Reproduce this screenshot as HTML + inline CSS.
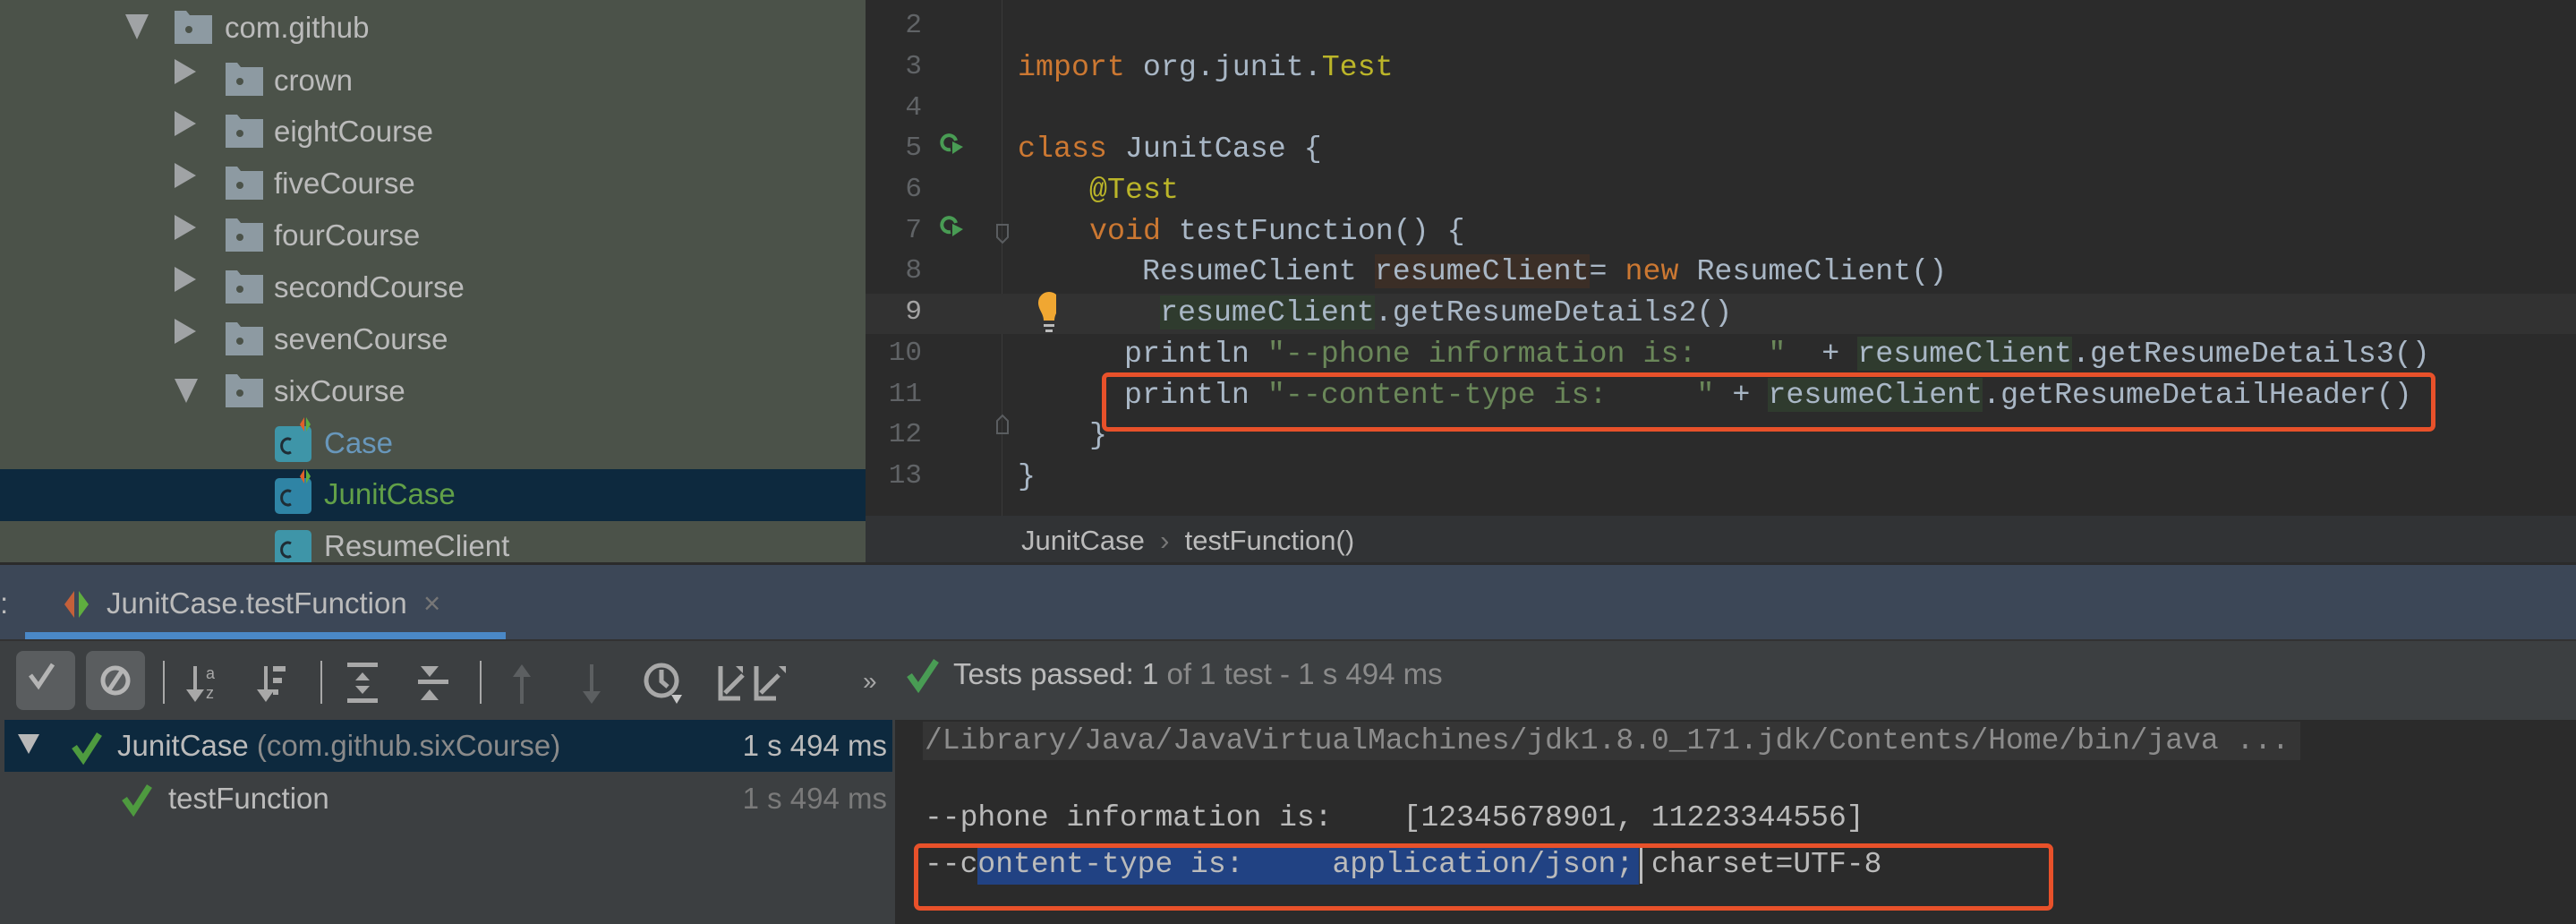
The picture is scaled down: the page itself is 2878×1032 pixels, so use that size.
<!DOCTYPE html>
<html><head><meta charset="utf-8"><style>
*{margin:0;padding:0;box-sizing:border-box}
body{width:2878px;height:1032px;overflow:hidden;background:#2b2b2b;position:relative;font-family:"Liberation Sans",sans-serif}
.a{position:absolute;white-space:pre}
.mono{font-family:"Liberation Mono",monospace;font-size:33.3px;line-height:46px}
.sans{font-size:33px;line-height:40px;color:#bbbbbb}
.k{color:#cc7832}.an{color:#bbb529}.s{color:#6a8759}.t{color:#a9b7c6}
.hg{background:#2f3b2e}.hb{background:#3b2e26}
.ln{position:absolute;left:990px;width:40px;text-align:right;font-family:"Liberation Mono",monospace;font-size:31px;color:#606366;line-height:46px}
</style></head><body>
<!-- project panel -->
<div class="a" style="left:0;top:0;width:967px;height:630px;background:#4b5249"></div>
<div class="a" style="left:0;top:524px;width:967px;height:58px;background:#0d293e"></div>
<svg class="a" style="left:0;top:0" width="967" height="630">
<g fill="#a0a3a5">
<polygon points="140,16 166,16 153,44"/>
<polygon points="195,66 219,80 195,94"/><polygon points="195,124 219,138 195,152"/><polygon points="195,182 219,196 195,210"/>
<polygon points="195,240 219,254 195,268"/><polygon points="195,298 219,312 195,326"/><polygon points="195,356 219,370 195,384"/>
<polygon points="195,423 221,423 208,450"/>
</g>
<g fill="#8d9aa2">
<path d="M195 12h13l4 5h25v32h-42z"/><path d="M252 70h13l4 5h25v32h-42z"/><path d="M252 128h13l4 5h25v32h-42z"/><path d="M252 186h13l4 5h25v32h-42z"/>
<path d="M252 244h13l4 5h25v32h-42z"/><path d="M252 302h13l4 5h25v32h-42z"/><path d="M252 360h13l4 5h25v32h-42z"/><path d="M252 418h13l4 5h25v32h-42z"/>
</g>
<g fill="#4b5249"><circle cx="211" cy="33" r="4"/><circle cx="268" cy="91" r="4"/><circle cx="268" cy="149" r="4"/><circle cx="268" cy="207" r="4"/><circle cx="268" cy="265" r="4"/><circle cx="268" cy="323" r="4"/><circle cx="268" cy="381" r="4"/><circle cx="268" cy="439" r="4"/></g>
<g><rect x="307" y="476" width="41" height="40" rx="5" fill="#3e95a8"/><rect x="307" y="534" width="41" height="40" rx="5" fill="#2f84a5"/><rect x="307" y="592" width="41" height="40" rx="5" fill="#3e95a8"/>
<polygon points="335,474 340,466 340,482" fill="#e0602a"/><polygon points="342,466 347,474 342,482" fill="#5fad3f"/>
<polygon points="335,532 340,524 340,540" fill="#e0602a"/><polygon points="342,524 347,532 342,540" fill="#5fad3f"/>
<g fill="none" stroke="#1f2d35" stroke-width="3"><path d="M325 491a7 8 0 1 0 0 14"/><path d="M325 549a7 8 0 1 0 0 14"/><path d="M325 607a7 8 0 1 0 0 14"/></g></g>
</svg>
<div class="a sans" style="left:251px;top:11px">com.github</div>
<div class="a sans" style="left:306px;top:70px">crown</div>
<div class="a sans" style="left:306px;top:127px">eightCourse</div>
<div class="a sans" style="left:306px;top:185px">fiveCourse</div>
<div class="a sans" style="left:306px;top:243px">fourCourse</div>
<div class="a sans" style="left:306px;top:301px">secondCourse</div>
<div class="a sans" style="left:306px;top:359px">sevenCourse</div>
<div class="a sans" style="left:306px;top:417px">sixCourse</div>
<div class="a sans" style="left:362px;top:475px;color:#6897bb">Case</div>
<div class="a sans" style="left:362px;top:532px;color:#62a048">JunitCase</div>
<div class="a sans" style="left:362px;top:590px">ResumeClient</div>

<!-- editor -->
<div class="a" style="left:967px;top:0;width:1911px;height:576px;background:#2b2b2b"></div>
<div class="a" style="left:1119px;top:0;width:1px;height:576px;background:#3a3a3a"></div>
<div class="a" style="left:967px;top:328px;width:1911px;height:45px;background:#323232"></div>
<div class="ln" style="top:6px">2</div><div class="ln" style="top:52px">3</div><div class="ln" style="top:98px">4</div><div class="ln" style="top:143px">5</div><div class="ln" style="top:189px">6</div><div class="ln" style="top:235px">7</div><div class="ln" style="top:280px">8</div><div class="ln" style="top:326px;color:#a4a3a3">9</div><div class="ln" style="top:372px">10</div><div class="ln" style="top:418px">11</div><div class="ln" style="top:463px">12</div><div class="ln" style="top:509px">13</div>
<svg class="a" style="left:1040px;top:140px" width="140" height="360">
<g fill="none" stroke="#499c54" stroke-width="4"><path d="M28 17a8 8 0 1 0 -6 10"/><path d="M28 109a8 8 0 1 0 -6 10"/></g>
<polygon points="24,18 36,24 24,32" fill="#499c54"/><polygon points="24,110 36,116 24,124" fill="#499c54"/>
<g fill="none" stroke="#5a5d60" stroke-width="2"><path d="M74 111h12v14l-6 6l-6-6z"/><path d="M74 344h12v-14l-6-6l-6 6z"/></g>
<path d="M132 186a12 12 0 0 0-12 12c0 8 6 12 6 20h12c0-8 6-12 6-20a12 12 0 0 0-12-12z" fill="#f0a732"/>
<rect x="126" y="222" width="12" height="3" fill="#bbb"/><rect x="128" y="228" width="8" height="3" fill="#bbb"/>
</svg>
<div class="a mono t" style="left:1137px;top:52px"><span class="k">import</span> org.junit.<span class="an">Test</span></div>
<div class="a mono t" style="left:1137px;top:143px"><span class="k">class</span> JunitCase {</div>
<div class="a mono an" style="left:1217px;top:189px">@Test</div>
<div class="a mono t" style="left:1217px;top:235px"><span class="k">void</span> testFunction() {</div>
<div class="a mono t" style="left:1276px;top:280px">ResumeClient <span class="hb">resumeClient</span>= <span class="k">new</span> ResumeClient()</div>
<div class="a mono t" style="left:1296px;top:326px"><span class="hg">resumeClient</span>.getResumeDetails2()</div>
<div class="a mono t" style="left:1256px;top:372px">println <span class="s">"--phone information is:    "</span>  + <span class="hg">resumeClient</span>.getResumeDetails3()</div>
<div class="a mono t" style="left:1256px;top:418px">println <span class="s">"--content-type is:     "</span> + <span class="hg">resumeClient</span>.getResumeDetailHeader()</div>
<div class="a mono t" style="left:1217px;top:463px">}</div>
<div class="a mono t" style="left:1137px;top:509px">}</div>
<div class="a" style="left:1231px;top:416px;width:1490px;height:66px;border:5px solid #e8512a;border-radius:7px"></div>
<div class="a" style="left:967px;top:576px;width:1911px;height:54px;background:#313335"></div>
<div class="a sans" style="left:1141px;top:584px;font-size:31px">JunitCase  <span style="color:#777">›</span>  testFunction()</div>

<!-- tool window tab bar -->
<div class="a" style="left:0;top:628px;width:2878px;height:86px;background:#3c4757;border-top:3px solid #2b2b2b"></div>
<div class="a sans" style="left:0;top:654px">:</div>
<svg class="a" style="left:70px;top:658px" width="40" height="34"><polygon points="13,2 2,17 13,32" fill="#c4603a"/><polygon points="18,2 29,17 18,32" fill="#5fad3f"/></svg>
<div class="a sans" style="left:119px;top:654px">JunitCase.testFunction  <span style="color:#777">×</span></div>
<div class="a" style="left:28px;top:706px;width:537px;height:8px;background:#4a88c7"></div>

<!-- toolbar -->
<div class="a" style="left:0;top:714px;width:2878px;height:90px;background:#3c3f41;border-top:2px solid #323232"></div>
<div class="a" style="left:18px;top:727px;width:66px;height:66px;background:#5a5d5f;border-radius:8px"></div>
<div class="a" style="left:96px;top:727px;width:66px;height:66px;background:#5a5d5f;border-radius:8px"></div>
<svg class="a" style="left:0;top:714px" width="1060" height="90">
<g fill="none" stroke="#b5b5b5" stroke-width="5"><path d="M34 40l9 12l16-24"/><circle cx="129" cy="46" r="14"/><path d="M121 58l16-24"/></g>
<g fill="#a8a8a8">
<rect x="182" y="24" width="2" height="48"/><rect x="358" y="24" width="2" height="48"/><rect x="536" y="24" width="2" height="48"/>
<rect x="216" y="30" width="4" height="30"/><polygon points="208,56 228,56 218,70"/><text x="230" y="44" font-size="18" fill="#a8a8a8" font-family="Liberation Sans">a</text><text x="230" y="66" font-size="18" fill="#a8a8a8" font-family="Liberation Sans">z</text>
<rect x="295" y="30" width="4" height="30"/><polygon points="287,56 307,56 297,70"/><rect x="305" y="30" width="14" height="6"/><rect x="305" y="43" width="10" height="6"/><rect x="305" y="56" width="6" height="6"/>
<rect x="388" y="26" width="34" height="5"/><polygon points="397,46 413,46 405,37"/><polygon points="397,52 413,52 405,61"/><rect x="388" y="66" width="34" height="5"/>
<polygon points="470,30 490,30 480,42"/><rect x="467" y="45" width="34" height="5"/><polygon points="470,68 490,68 480,56"/>
</g>
<g fill="#5c5f61"><rect x="581" y="38" width="4" height="34"/><polygon points="573,42 593,42 583,28"/><rect x="659" y="28" width="4" height="34"/><polygon points="651,58 671,58 661,72"/></g>
<g fill="none" stroke="#a8a8a8" stroke-width="5"><circle cx="739" cy="46" r="17"/><path d="M739 34v13l7 6"/><path d="M805 30v36h22M810 60l20-20M845 30v36h22M850 60l20-20"/></g>
<polygon points="750,62 762,62 756,72" fill="#c8c8c8"/><polygon points="830,38 830,30 822,30" fill="#a8a8a8"/>
<polygon points="878,30 870,30 878,38" fill="#a8a8a8"/>
<text x="964" y="56" font-size="28" fill="#a8a8a8" font-family="Liberation Sans">»</text>
<path d="M1016 40l10 14l20-30" fill="none" stroke="#499c54" stroke-width="7"/>
</svg>
<div class="a sans" style="left:1065px;top:733px">Tests passed: 1 <span style="color:#8a8a8a">of 1 test - 1 s 494 ms</span></div>

<!-- tree -->
<div class="a" style="left:0;top:804px;width:1000px;height:228px;background:#3c3f41"></div>
<div class="a" style="left:5px;top:804px;width:992px;height:58px;background:#0d293e"></div>
<svg class="a" style="left:0;top:804px" width="460" height="120">
<polygon points="20,16 44,16 32,38" fill="#b8b8b8"/>
<path d="M83 30l10 14l18-28" fill="none" stroke="#4e9a3f" stroke-width="7"/>
<path d="M139 88l10 14l18-28" fill="none" stroke="#4e9a3f" stroke-width="7"/>
</svg>
<div class="a sans" style="left:131px;top:813px">JunitCase <span style="color:#8a8a8a">(com.github.sixCourse)</span></div>
<div class="a sans" style="left:188px;top:872px">testFunction</div>
<div class="a sans" style="left:790px;top:813px;width:201px;text-align:right">1 s 494 ms</div>
<div class="a sans" style="left:790px;top:872px;width:201px;text-align:right;color:#7a7a7a">1 s 494 ms</div>

<!-- console -->
<div class="a" style="left:1000px;top:804px;width:1878px;height:228px;background:#2b2b2b"></div>
<div class="a" style="left:1031px;top:806px;width:1539px;height:43px;background:#353535"></div>
<div class="a mono" style="left:1033px;top:805px;color:#8c8c8c;font-size:33px">/Library/Java/JavaVirtualMachines/jdk1.8.0_171.jdk/Contents/Home/bin/java ...</div>
<div class="a mono" style="left:1033px;top:891px;color:#bbbbbb;font-size:33px">--phone information is:    [12345678901, 11223344556]</div>
<div class="a" style="left:1092px;top:947px;width:739px;height:41px;background:#214283"></div>
<div class="a" style="left:1832px;top:947px;width:3px;height:40px;background:#bbb"></div>
<div class="a mono" style="left:1033px;top:943px;color:#bbbbbb;font-size:33px">--content-type is:     application/json; charset=UTF-8</div>
<div class="a" style="left:1021px;top:942px;width:1273px;height:75px;border:5px solid #e8512a;border-radius:7px"></div>
</body></html>
